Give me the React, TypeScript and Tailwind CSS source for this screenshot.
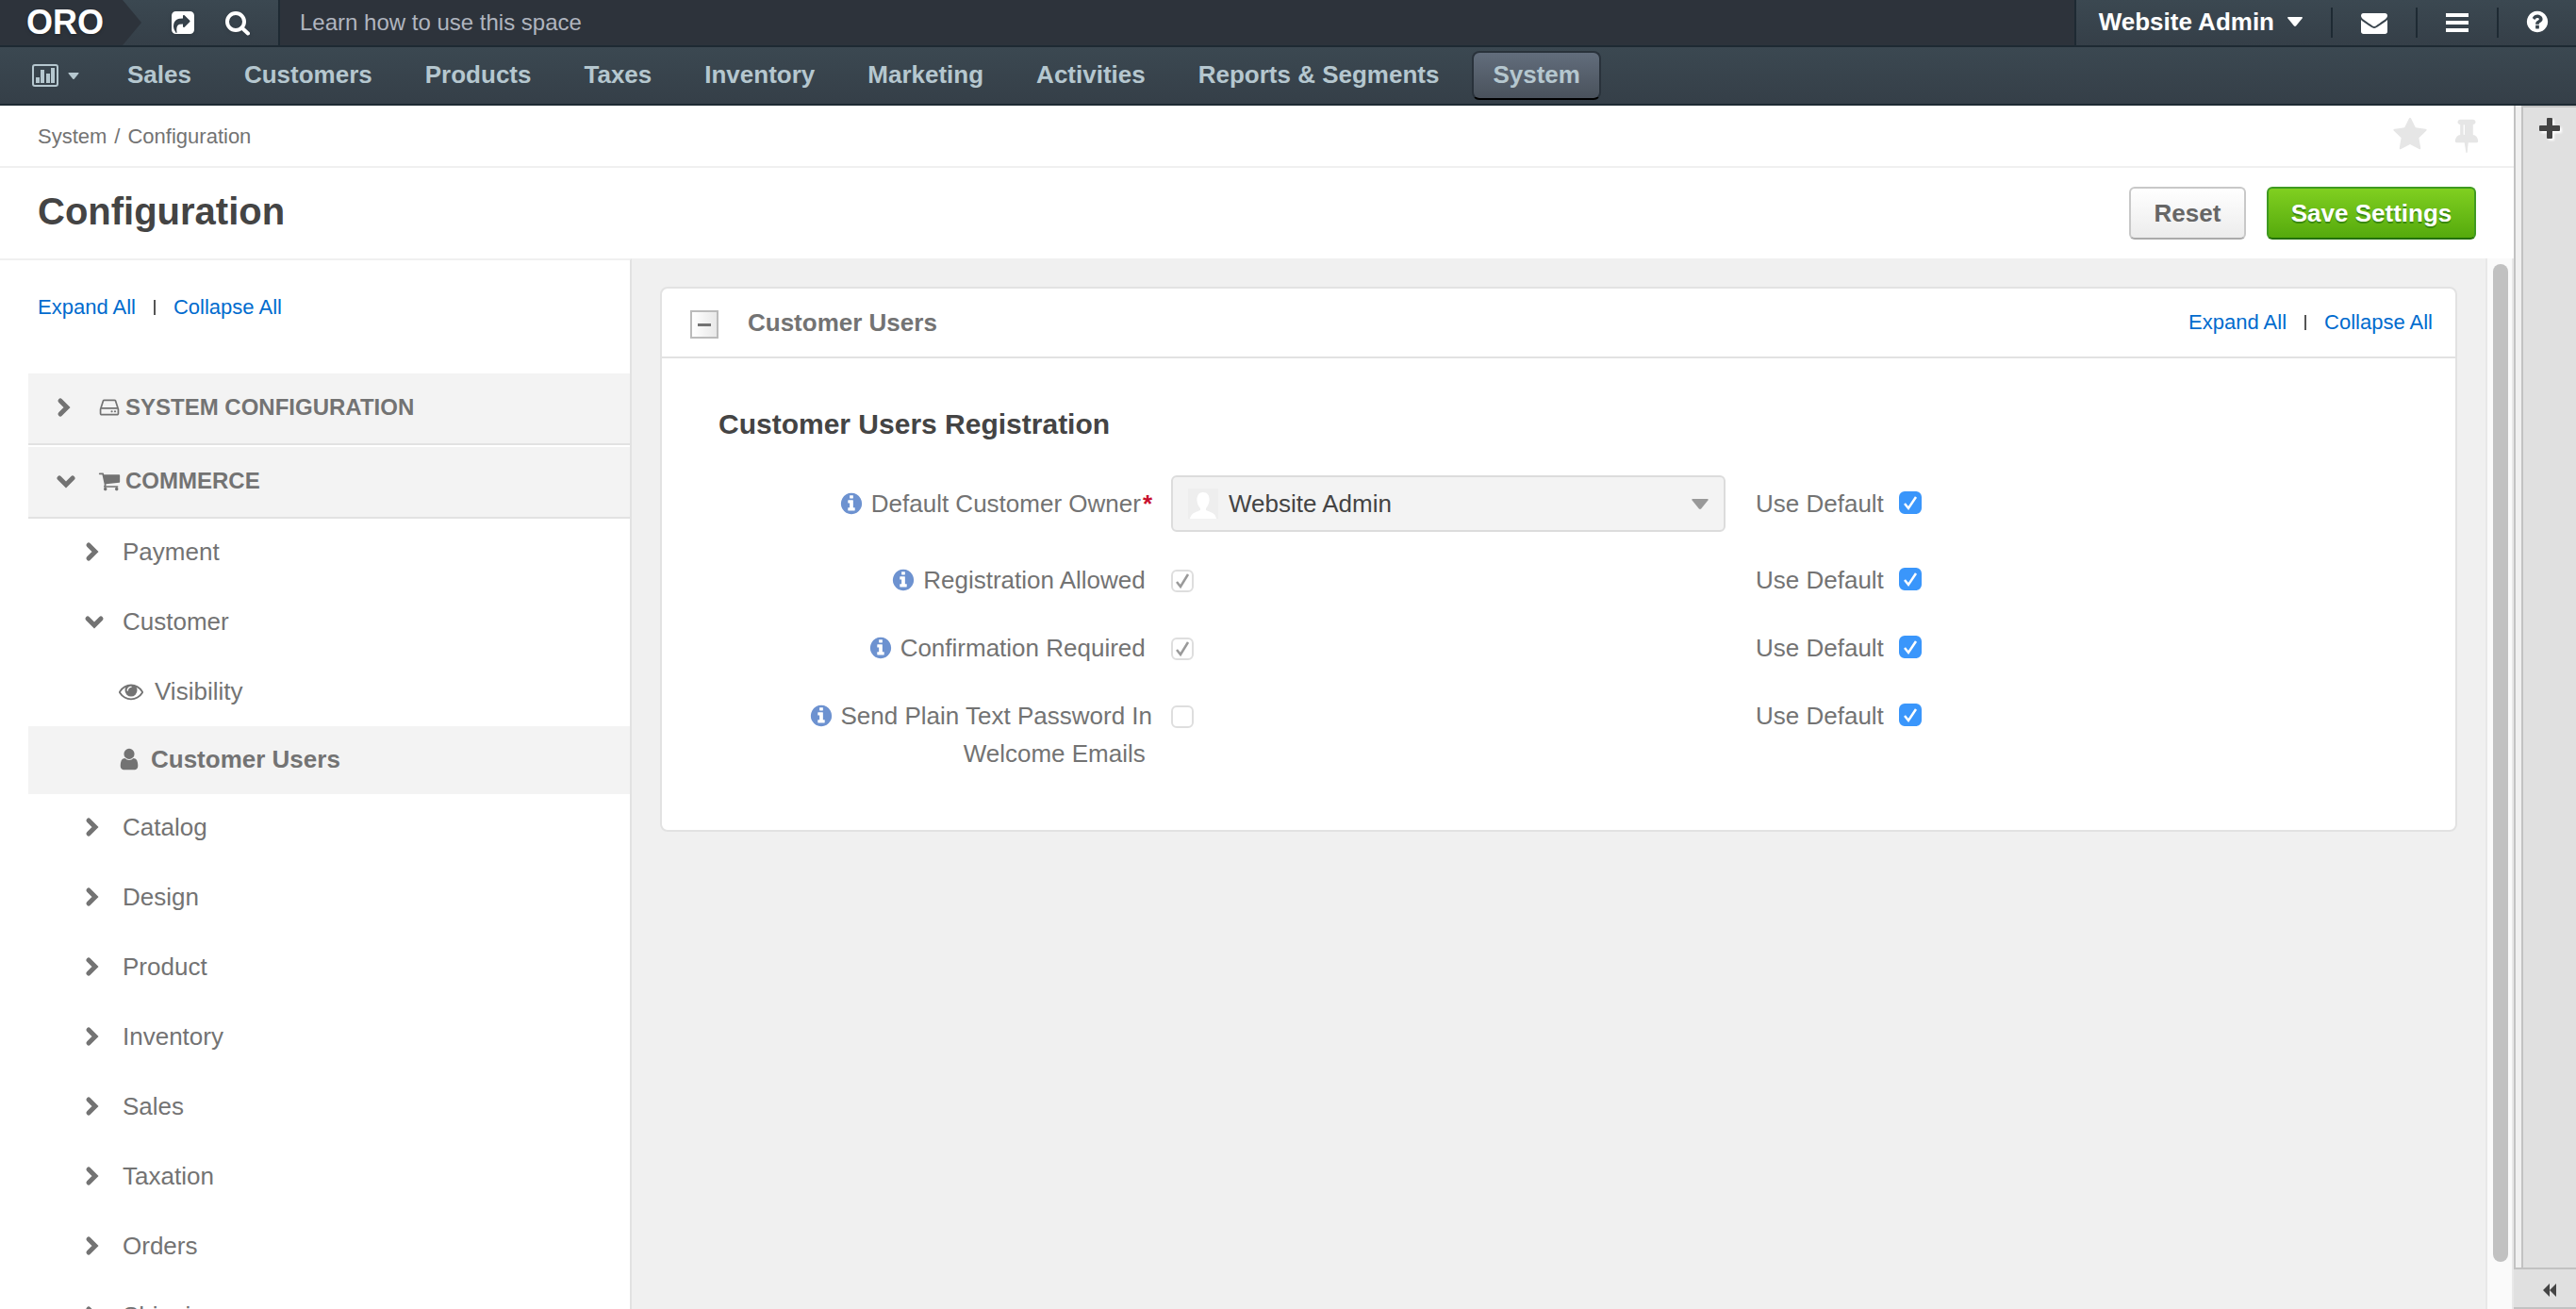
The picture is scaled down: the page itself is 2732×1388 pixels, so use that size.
import { useState, type ReactNode } from "react";

const ICONS = {
  share:
    "M1005 1197l352-352q19-19 19-45t-19-45l-352-352q-30-31-69-14-40 17-40 59v160q-119 0-216 19.5t-162.5 51-114 79-76.5 95.5-44.5 109-21.5 111.5-5 110.5q0 181 167 404 11 12 25 12 7 0 13-3 22-9 19-33-44-354 62-473 46-52 130-75.5t224-23.5v160q0 42 40 59 12 5 24 5 26 0 45-19zM1664 416v960q0 119-84.5 203.5t-203.5 84.5h-960q-119 0-203.5-84.5t-84.5-203.5v-960q0-119 84.5-203.5t203.5-84.5h960q119 0 203.5 84.5t84.5 203.5z",
  star: "M1728 647q0 22-26 48l-363 354 86 500q1 7 1 20 0 21-10.5 35.5t-30.5 14.5q-19 0-40-12l-449-236-449 236q-22 12-40 12-21 0-31.5-14.5t-10.5-35.5q0-6 2-20l86-500-364-354q-25-27-25-48 0-37 56-46l502-73 225-455q19-41 49-41t49 41l225 455 502 73q56 9 56 46z",
  info: "M1152 1376v-160q0-14-9-23t-23-9h-96v-512q0-14-9-23t-23-9h-320q-14 0-23 9t-9 23v160q0 14 9 23t23 9h96v320h-96q-14 0-23 9t-9 23v160q0 14 9 23t23 9h448q14 0 23-9t9-23zm-128-896v-160q0-14-9-23t-23-9h-192q-14 0-23 9t-9 23v160q0 14 9 23t23 9h192q14 0 23-9t9-23zm640 416q0 209-103 385.5t-279.5 279.5-385.5 103-385.5-103-279.5-279.5-103-385.5 103-385.5 279.5-279.5 385.5-103 385.5 103 279.5 279.5 103 385.5z",
  question:
    "M1024 1376v-192q0-14-9-23t-23-9h-192q-14 0-23 9t-9 23v192q0 14 9 23t23 9h192q14 0 23-9t9-23zm256-672q0-88-55.5-163t-138.5-116-170-41q-243 0-371 213-15 24 8 42l132 100q7 6 19 6 16 0 25-12 53-68 86-92 34-24 86-24 48 0 85.5 26t37.5 59q0 38-20 61t-68 45q-63 28-115.5 86.5t-52.5 125.5v36q0 14 9 23t23 9h192q14 0 23-9t9-23q0-19 21.5-49.5t54.5-49.5q32-18 49-28.5t46-35 44.5-48 28-60.5 12.5-81zm384 192q0 209-103 385.5t-279.5 279.5-385.5 103-385.5-103-279.5-279.5-103-385.5 103-385.5 279.5-279.5 385.5-103 385.5 103 279.5 279.5 103 385.5z",
  eye: "M1664 960q-152-236-381-353 61 104 61 225 0 185-131.5 316.5t-316.5 131.5-316.5-131.5-131.5-316.5q0-121 61-225-229 117-381 353 133 205 333.5 326.5t434.5 121.5 434.5-121.5 333.5-326.5zm-720-384q0-20-14-34t-34-14q-125 0-214.5 89.5t-89.5 214.5q0 20 14 34t34 14 34-14 14-34q0-86 61-147t147-61q20 0 34-14t14-34zm848 384q0 34-20 69-140 230-376.5 368.5t-499.5 138.5-499.5-139-376.5-368q-20-35-20-69t20-69q140-229 376.5-368t499.5-139 499.5 139 376.5 368q20 35 20 69z",
  cart: "M704 1536q0 52-38 90t-90 38-90-38-38-90 38-90 90-38 90 38 38 90zm896 0q0 52-38 90t-90 38-90-38-38-90 38-90 90-38 90 38 38 90zm128-1088v512q0 24-16.5 42.5t-40.5 21.5l-1044 122q13 60 13 70 0 16-24 64h920q26 0 45 19t19 45-19 45-45 19h-1024q-26 0-45-19t-19-45q0-11 8-31.5t16-36 21.5-40 15.5-29.5l-177-823h-204q-26 0-45-19t-19-45 19-45 45-19h256q16 0 28.5 6.5t19.5 15.5 13 24.5 8 26 5.5 29.5 4.5 26h1201q26 0 45 19t19 45z",
  envelope:
    "M1792 710v794q0 66-47 113t-113 47h-1472q-66 0-113-47t-47-113v-794q44 49 101 87 362 246 497 345 57 42 92.5 65.5t94.5 48 110 24.5h2q51 0 110-24.5t94.5-48 92.5-65.5q170-123 498-345 57-39 100-87zm0-294q0 79-49 151t-122 123q-376 261-468 325-10 7-42.5 31t-54 38.5-52 32.5-57.5 27-50 9h-2q-23 0-50-9t-57.5-27-52-32.5-54-38.5-42.5-31q-91-64-262-182.5t-205-142.5q-62-42-117-115.5t-55-136.5q0-78 41.5-130t118.5-52h1472q65 0 112.5 47t47.5 113z",
  pin: "M800 864v-448q0-14-9-23t-23-9-23 9-9 23v448q0 14 9 23t23 9 23-9 9-23zm672 352q0 26-19 45t-45 19h-429l-51 483q-2 12-10.5 20.5t-20.5 8.5h-1q-27 0-32-27l-76-485h-404q-26 0-45-19t-19-45q0-123 78.5-221.5t177.5-98.5v-512q-52 0-90-38t-38-90 38-90 90-38h640q52 0 90 38t38 90-38 90-90 38v512q99 0 177.5 98.5t78.5 221.5z",
  disk: "M1168 1216q0 33-23.5 56.5t-56.5 23.5-56.5-23.5-23.5-56.5 23.5-56.5 56.5-23.5 56.5 23.5 23.5 56.5zm256 0q0 33-23.5 56.5t-56.5 23.5-56.5-23.5-23.5-56.5 23.5-56.5 56.5-23.5 56.5 23.5 23.5 56.5zm112 160v-320q0-13-9.5-22.5t-22.5-9.5h-1216q-13 0-22.5 9.5t-9.5 22.5v320q0 13 9.5 22.5t22.5 9.5h1216q13 0 22.5-9.5t9.5-22.5zm-1230-480h1180l-157-482q-4-13-16-21.5t-26-8.5h-782q-14 0-26 8.5t-16 21.5zm1358 160v320q0 66-47 113t-113 47h-1216q-66 0-113-47t-47-113v-320q0-25 16-75l197-606q17-53 63-86t101-33h782q55 0 101 33t63 86l197 606q16 50 16 75z",
  user: "M1536 1399q0 109-62.5 187t-150.5 78h-854q-88 0-150.5-78t-62.5-187q0-85 8.5-160.5t31.5-152 58.5-131 94-89 134.5-34.5q131 128 313 128t313-128q76 0 134.5 34.5t94 89 58.5 131 31.5 152 8.5 160.5zm-256-887q0 159-112.5 271.5t-271.5 112.5-271.5-112.5-112.5-271.5 112.5-271.5 271.5-112.5 271.5 112.5 112.5 271.5z",
};

function Icon({ name, className }: { name: keyof typeof ICONS; className: string }) {
  return (
    <svg viewBox="0 0 1792 1792" fill="currentColor" fillRule="evenodd" className={className} aria-hidden="true">
      <path d={ICONS[name]} />
    </svg>
  );
}

function Chevron({ open }: { open?: boolean }) {
  return (
    <svg
      viewBox="0 0 20 20"
      className="h-5 w-5 shrink-0 overflow-visible"
      fill="none"
      stroke="currentColor"
      strokeWidth="5"
      strokeLinecap="round"
      aria-hidden="true"
    >
      {open ? <path d="M3 7l7 7 7-7" /> : <path d="M4 3l7 7-7 7" />}
    </svg>
  );
}

function Caret({ className }: { className: string }) {
  return (
    <svg viewBox="0 0 16 10" fill="currentColor" className={className} aria-hidden="true">
      <path d="M0 1q0-1 1-1h14q1 0 1 1L9 9.500q-1 .8-2 0z" />
    </svg>
  );
}

function ExpandLinks() {
  return (
    <div className="flex items-center text-[22px] leading-8 text-[#006bce]">
      <a href="#expand">Expand All</a>
      <span className="mx-[19px] h-4 w-0.5 bg-[#555]" />
      <a href="#collapse">Collapse All</a>
    </div>
  );
}

const NAV = [
  "Sales",
  "Customers",
  "Products",
  "Taxes",
  "Inventory",
  "Marketing",
  "Activities",
  "Reports & Segments",
  "System",
];

function TopBar() {
  return (
    <header className="shrink-0">
      <div className="flex h-[50px] border-b-2 border-[#1e2a33] bg-[#2d333b] text-white">
        <div className="flex border-r-2 border-[#1e2a33] bg-linear-to-b from-[#3b4851] to-[#353f48]">
          <a
            href="#home"
            className="flex w-[150px] items-center bg-[#2d333b] pl-7 text-[36px] font-bold text-shadow-md [clip-path:polygon(0_0,130px_0,150px_50%,130px_100%,0_100%)]"
          >
            ORO
          </a>
          <button type="button" aria-label="Shortcuts" className="ml-[30px]">
            <Icon name="share" className="h-7 w-7 drop-shadow" />
          </button>
          <button type="button" aria-label="Search" className="mr-[30px] ml-[31px]">
            <svg viewBox="0 0 26 26" className="mt-0.5 h-[26px] w-[26px] drop-shadow" fill="none" stroke="currentColor" aria-hidden="true">
              <circle cx="11" cy="11" r="9" strokeWidth="4" />
              <path d="M17.500 17.500l6.500 6" strokeWidth="4" strokeLinecap="round" />
            </svg>
          </button>
        </div>
        <a href="#learn" className="flex flex-1 items-center pl-[21px] text-2xl text-[#b0b5bf]">
          Learn how to use this space
        </a>
        <div className="flex items-center border-l-2 border-[#1e2a33] bg-linear-to-b from-[#3b4851] to-[#353f48]">
          <button type="button" className="flex items-center pr-[30px] pb-0.5 pl-6 text-[26px] leading-8 font-bold">
            Website Admin
            <Caret className="ml-3.5 h-2.5 w-4" />
          </button>
          <button type="button" aria-label="Messages" className="flex h-8 items-center border-l-2 border-[#1e2a33] px-[30px]">
            <Icon name="envelope" className="h-7 w-7" />
          </button>
          <button type="button" aria-label="Menu" className="flex h-8 items-center border-l-2 border-[#1e2a33] px-[30px]">
            <svg viewBox="0 0 24 20" className="h-5 w-6" fill="currentColor" aria-hidden="true">
              <path d="M0 0h24v4H0zM0 8h24v4H0zM0 16h24v4H0z" />
            </svg>
          </button>
          <button type="button" aria-label="Help" className="flex h-8 items-center border-l-2 border-[#1e2a33] px-7 pb-0.5">
            <Icon name="question" className="h-[26px] w-[26px]" />
          </button>
        </div>
      </div>
      <nav className="flex h-[62px] items-center border-b-2 border-[#1e2a33] bg-linear-to-b from-[#3b4851] to-[#353f48] pl-[34px] text-[#b5c7cf]">
        <button type="button" aria-label="Dashboards" className="mr-[30px] flex items-center gap-2.5">
          <svg viewBox="0 0 28 24" className="h-6 w-7" aria-hidden="true">
            <rect x="1" y="1" width="26" height="22" rx="2" fill="none" stroke="currentColor" strokeWidth="2" />
            <path d="M4 14h4v6H4zM9 6h4v14H9zM15 10h4v10h-4zM20 4h4v16h-4z" fill="currentColor" />
          </svg>
          <Caret className="h-[7px] w-3" />
        </button>
        <ul className="flex gap-3.5 text-[26px] leading-8 font-bold">
          {NAV.map((item) => (
            <li key={item}>
              <a
                href="#nav"
                className={
                  item === "System"
                    ? "flex h-[52px] items-center rounded-lg border-2 border-[#29323b] border-b-black bg-linear-to-b from-[#626d7c] to-[#4a525c] px-5 pb-0.5"
                    : "flex h-[52px] items-center border-2 border-transparent px-[19px] pb-0.5"
                }
              >
                {item}
              </a>
            </li>
          ))}
        </ul>
      </nav>
    </header>
  );
}

function SectionRow({ open, icon, label }: { open?: boolean; icon: "disk" | "cart"; label: string }) {
  return (
    <button
      type="button"
      aria-expanded={!!open}
      className="flex h-[76px] items-center border-b-2 border-[#e2e2e2] bg-[#f3f3f3] pb-0.5 pl-[30px] text-2xl font-bold uppercase"
    >
      <Chevron open={open} />
      <Icon name={icon} className="mr-[5px] ml-6 h-6 w-6" />
      {label}
    </button>
  );
}

function TreeRow({ open, label }: { open?: boolean; label: string }) {
  return (
    <button type="button" aria-expanded={!!open} className="flex h-[74px] shrink-0 items-center gap-5 pb-1 pl-[60px]">
      <Chevron open={open} />
      {label}
    </button>
  );
}

const CLOSED = ["Catalog", "Design", "Product", "Inventory", "Sales", "Taxation", "Orders", "Shipping"];

function Sidebar() {
  return (
    <aside className="flex w-[670px] shrink-0 flex-col overflow-hidden border-t-2 border-r-2 border-t-[#f0f0f0] border-r-[#e2e2e2] bg-white pl-[30px] text-[26px] text-[#737373]">
      <div className="flex h-[120px] shrink-0 items-start pt-[34px] pl-2.5">
        <ExpandLinks />
      </div>
      <div className="flex shrink-0 flex-col gap-0.5">
        <SectionRow icon="disk" label="System Configuration" />
        <SectionRow open icon="cart" label="Commerce" />
      </div>
      <TreeRow label="Payment" />
      <TreeRow open label="Customer" />
      <a href="#visibility" className="flex h-[72px] shrink-0 items-center gap-3 pb-0.5 pl-24">
        <Icon name="eye" className="h-[26px] w-[26px]" />
        Visibility
      </a>
      <a
        href="#customer-users"
        aria-current="page"
        className="flex h-[72px] shrink-0 items-center gap-2.5 bg-[#f3f3f3] pb-0.5 pl-[94px] font-bold"
      >
        <Icon name="user" className="h-[26px] w-[26px]" />
        Customer Users
      </a>
      {CLOSED.map((label) => (
        <TreeRow key={label} label={label} />
      ))}
    </aside>
  );
}

function DisabledBox({ id, checked }: { id: string; checked: boolean }) {
  return (
    <span className="mt-0.5 grid">
      <input
        id={id}
        type="checkbox"
        disabled
        checked={checked}
        readOnly
        className="peer col-start-1 row-start-1 h-6 w-6 appearance-none rounded-md border-2 border-[#dedede] bg-white"
      />
      <svg
        viewBox="0 0 24 24"
        className="pointer-events-none invisible col-start-1 row-start-1 h-6 w-6 text-[#9a9a9a] peer-checked:visible"
        fill="none"
        stroke="currentColor"
        strokeWidth="2.500"
        aria-hidden="true"
      >
        <path d="M6 13l4 5 8-13" />
      </svg>
    </span>
  );
}

function UseDefault() {
  const [on, setOn] = useState(true);
  return (
    <label className="flex h-10 items-center gap-4">
      Use Default
      <span className="-mt-0.5 grid">
        <input
          type="checkbox"
          checked={on}
          onChange={() => setOn(!on)}
          className="peer col-start-1 row-start-1 h-6 w-6 appearance-none rounded-md border-2 border-[#ccc] bg-white checked:border-[#3a96fb] checked:bg-[#3a96fb]"
        />
        <svg
          viewBox="0 0 24 24"
          className="pointer-events-none invisible col-start-1 row-start-1 h-6 w-6 text-white peer-checked:visible"
          fill="none"
          stroke="currentColor"
          strokeWidth="2.500"
          aria-hidden="true"
        >
          <path d="M6 13l4 5 8-12" />
        </svg>
      </span>
    </label>
  );
}

function Row({ id, label, required, children }: { id: string; label: string; required?: boolean; children: ReactNode }) {
  return (
    <div className={required ? "-mb-px flex items-center" : "flex items-start"}>
      <label htmlFor={id} className="w-[460px] text-right leading-10">
        <Icon name="info" className="mr-2 inline h-[26px] w-[26px] -translate-y-0.5 text-[#6d92d0]" />
        {label}
        {required ? <span className="ml-0.5 font-bold text-[#c8102e]">*</span> : "\u00a0"}
      </label>
      <div className="ml-5 flex min-h-10 w-[588px] items-center">{children}</div>
      <div className="ml-8">
        <UseDefault />
      </div>
    </div>
  );
}

function SettingsPanel() {
  return (
    <section className="rounded-lg border-2 border-[#e2e2e2] bg-white">
      <div className="flex h-[74px] items-center border-b-2 border-[#e2e2e2] pr-6 pl-[30px]">
        <button
          type="button"
          aria-label="Collapse section"
          className="mt-1 flex h-[30px] w-[30px] items-center justify-center border-2 border-[#bbb] bg-linear-to-r from-white to-[#e8e8e8]"
        >
          <span className="h-[3px] w-3.5 bg-[#737373]" />
        </button>
        <h2 className="ml-[31px] flex-1 text-[26px] font-bold text-[#737373]">Customer Users</h2>
        <ExpandLinks />
      </div>
      <div className="pt-[50px] pb-[61px] pl-[60px] text-[26px] text-[#737373]">
        <h3 className="text-[30px] leading-10 font-bold text-[#444]">Customer Users Registration</h3>
        <div className="mt-[34px] flex flex-col gap-8">
          <Row id="owner" label="Default Customer Owner" required>
            <div className="grid flex-1 items-center">
              <select
                id="owner"
                className="col-start-1 row-start-1 h-[60px] appearance-none rounded-md border-2 border-[#dcdcdc] bg-[#f3f3f3] pl-[59px] text-[#444]"
              >
                <option>Website Admin</option>
              </select>
              <svg viewBox="0 0 32 32" className="pointer-events-none col-start-1 row-start-1 ml-[18px] h-8 w-8" aria-hidden="true">
                <rect width="32" height="32" fill="#eee" />
                <path d="M16 4c-5 0-7 4-6.500 9 .4 4 2 6 3.500 8v2c-5 2-10 3-11 9h28c-1-6-6-7-11-9v-2c1.500-2 3-4 3.500-8C23 8 21 4 16 4z" fill="#fff" />
              </svg>
              <Caret className="pointer-events-none col-start-1 row-start-1 mr-[18px] h-[11px] w-[18px] justify-self-end text-[#999]" />
            </div>
          </Row>
          <Row id="registration" label="Registration Allowed">
            <DisabledBox id="registration" checked />
          </Row>
          <Row id="confirmation" label="Confirmation Required">
            <DisabledBox id="confirmation" checked />
          </Row>
          <Row id="plain" label="Send Plain Text Password In Welcome Emails">
            <DisabledBox id="plain" checked={false} />
          </Row>
        </div>
      </div>
    </section>
  );
}

function RightRail() {
  return (
    <div className="flex w-[66px] shrink-0 flex-col bg-[#e0e0e0]">
      <div className="flex flex-1 border-l-2 border-[#c2c2c2]">
        <div className="w-2 border-r-2 border-[#c2c2c2] bg-[#f0f0f0]" />
        <div className="flex flex-1 items-start justify-center border-t-2 border-[#c2c2c2] pt-[11px]">
          <button type="button" aria-label="Add widget">
            <svg viewBox="0 0 22 22" className="h-[22px] w-[22px] drop-shadow-[2px_2px_1px_white]" fill="#444" aria-hidden="true">
              <path d="M8 1q0-1 1-1h4q1 0 1 1v7h7q1 0 1 1v4q0 1-1 1h-7v7q0 1-1 1H9q-1 0-1-1v-7H1q-1 0-1-1V9q0-1 1-1h7z" />
            </svg>
          </button>
        </div>
      </div>
      <button
        type="button"
        aria-label="Expand sidebar"
        className="flex h-11 items-center justify-center border-y-2 border-[#c2c2c2] pt-1 pl-2.5"
      >
        <svg viewBox="0 0 14 14" className="h-3.5 w-3.5" fill="#444" aria-hidden="true">
          <path d="M7 0v14L0 7zM14 0v14L7 7z" />
        </svg>
      </button>
    </div>
  );
}

export default function App() {
  return (
    <div className="flex h-screen flex-col overflow-hidden bg-white font-['Liberation_Sans',Arial,sans-serif]">
      <TopBar />
      <div className="flex min-h-0 flex-1">
        <div className="flex min-w-0 flex-1 flex-col">
          <div className="flex h-[66px] shrink-0 items-center justify-between border-b-2 border-[#f0f0f0] pr-[31px] pl-10 text-[22px] text-[#737373]">
            <div className="flex gap-2">
              <a href="#system">System</a>
              <span>/</span>
              <span>Configuration</span>
            </div>
            <div className="flex items-center gap-[22px] pb-0.5 text-[#e6e6e6]">
              <button type="button" aria-label="Add to favorites">
                <Icon name="star" className="h-[38px] w-[38px]" />
              </button>
              <button type="button" aria-label="Pin page">
                <Icon name="pin" className="h-[38px] w-[38px]" />
              </button>
            </div>
          </div>
          <div className="flex h-24 shrink-0 items-center justify-between px-10">
            <h1 className="pb-1 text-[40px] leading-[48px] font-bold text-[#444]">Configuration</h1>
            <div className="flex gap-[22px] text-[26px] font-bold">
              <button
                type="button"
                className="h-14 w-[124px] rounded-md border-2 border-[#c8c8c8] border-b-[#aaa] bg-linear-to-b from-white to-[#ececec] text-[#666]"
              >
                Reset
              </button>
              <button
                type="button"
                className="h-14 w-[222px] rounded-md border-2 border-[#3f9a20] border-b-[#237007] bg-linear-to-b from-[#80cf20] to-[#55aa0c] text-white text-shadow-[0_2px_0_#3a8a10]"
              >
                Save Settings
              </button>
            </div>
          </div>
          <div className="flex min-h-0 flex-1">
            <Sidebar />
            <main className="min-w-0 flex-1 bg-[#f0f0f0] p-[30px]">
              <SettingsPanel />
            </main>
            <div className="w-[30px] border-r-2 border-l-2 border-[#e8e8e8] bg-[#fafafa] px-1.5 pt-1.5 pb-[50px]">
              <div className="h-full w-4 rounded-full bg-[#c1c1c1]" />
            </div>
          </div>
        </div>
        <RightRail />
      </div>
    </div>
  );
}
